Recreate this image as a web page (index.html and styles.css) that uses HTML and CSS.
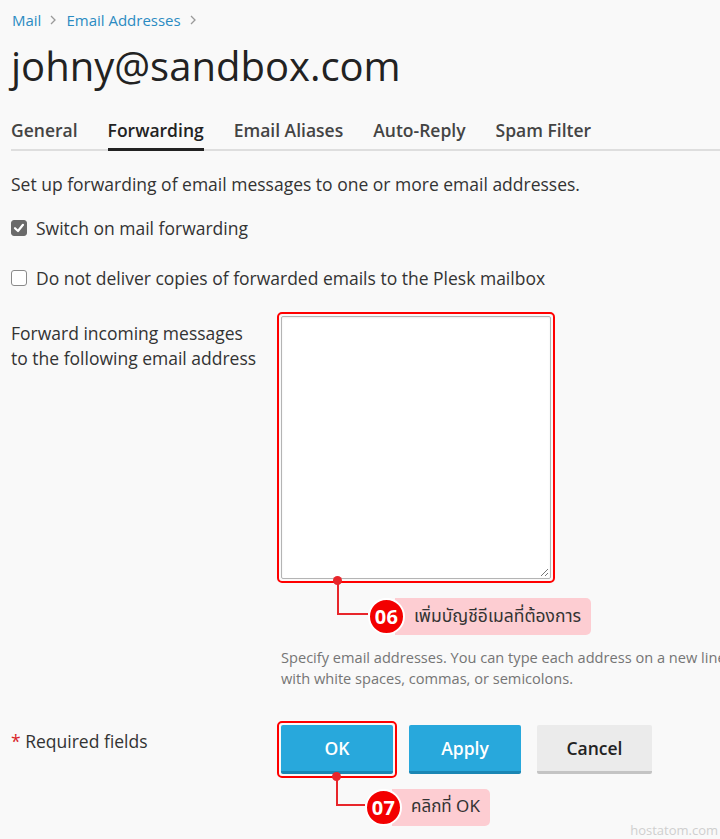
FILE: index.html
```html
<!DOCTYPE html>
<html lang="en">
<head>
<meta charset="utf-8">
<title>johny@sandbox.com</title>
<link rel="stylesheet" href="styles.css">
</head>
<body>
<div class="page">
  <nav class="breadcrumb">
    <a href="#">Mail</a>
    <svg class="chev" width="8" height="12" viewBox="0 0 8 12"><polyline points="2,2 6,6 2,10" fill="none" stroke="#9a9a9a" stroke-width="1.3"/></svg>
    <a href="#">Email Addresses</a>
    <svg class="chev" width="8" height="12" viewBox="0 0 8 12"><polyline points="2,2 6,6 2,10" fill="none" stroke="#9a9a9a" stroke-width="1.3"/></svg>
  </nav>

  <h1 class="title">johny@sandbox.com</h1>

  <div class="tabs">
    <span class="tab">General</span>
    <span class="tab active">Forwarding</span>
    <span class="tab">Email Aliases</span>
    <span class="tab">Auto-Reply</span>
    <span class="tab">Spam Filter</span>
  </div>

  <p class="intro">Set up forwarding of email messages to one or more email addresses.</p>

  <div class="check-row first">
    <span class="box checked">
      <svg width="16" height="16" viewBox="0 0 16 16"><polyline points="4,8.2 7,11 12,4.8" fill="none" stroke="#fff" stroke-width="2.2" stroke-linecap="round" stroke-linejoin="round"/></svg>
    </span>
    <span class="check-label">Switch on mail forwarding</span>
  </div>

  <div class="check-row">
    <span class="box"></span>
    <span class="check-label">Do not deliver copies of forwarded emails to the Plesk mailbox</span>
  </div>

  <div class="form-row">
    <div class="form-label">Forward incoming messages<br>to the following email address</div>
    <div class="form-field">
      <div class="hl hl-area">
        <div class="textarea">
          <svg class="grip" width="10" height="10" viewBox="0 0 10 10"><line x1="9" y1="2" x2="2" y2="9" stroke="#777" stroke-width="1"/><line x1="9" y1="6" x2="6" y2="9" stroke="#777" stroke-width="1"/></svg>
        </div>
      </div>
      <div class="callout callout-06">
        <span class="connector"></span>
        <span class="dot"></span>
        <span class="num">06</span>
        <span class="note thai">เพิ่มบัญชีอีเมลที่ต้องการ</span>
      </div>
      <p class="hint">Specify email addresses. You can type each address on a new line or separate them<br>with white spaces, commas, or semicolons.</p>
    </div>
  </div>

  <div class="form-row buttons-row">
    <div class="form-label req"><span class="star">*</span> Required fields</div>
    <div class="form-field">
      <div class="btns">
        <div class="hl hl-btn"><button class="btn btn-primary">OK</button></div>
        <button class="btn btn-primary">Apply</button>
        <button class="btn btn-cancel">Cancel</button>
      </div>
      <div class="callout callout-07">
        <span class="connector"></span>
        <span class="dot"></span>
        <span class="num">07</span>
        <span class="note thai">คลิกที่ OK</span>
      </div>
    </div>
  </div>

  <div class="watermark">hostatom.com</div>
</div>
</body>
</html>
```

FILE: styles.css
```css
html, body {
  margin: 0;
  padding: 0;
  height: 839px;
  overflow: hidden;
  background: #f9f9f9;
}

body {
  font-family: "Open Sans", "Noto Sans", sans-serif;
  color: #333;
  font-size: 17.5px;
}

.page {
  position: relative;
  height: 839px;
  padding-left: 11px;
  white-space: nowrap;
}

.breadcrumb {
  display: flex;
  align-items: center;
  height: 20px;
  padding-top: 10px;
  padding-left: 1px;
  font-size: 15px;
  line-height: 20px;
}

.breadcrumb a {
  color: #2b8bc2;
  text-decoration: none;
}

.chev {
  margin: 0 9px 0 8px;
}

.title {
  margin: 12px 0 0 0;
  font-size: 40px;
  line-height: 48px;
  font-weight: 400;
  color: #222;
}

.tabs {
  display: flex;
  gap: 30px;
  margin-top: 20px;
  padding-top: 8px;
  border-bottom: 2px solid #dedede;
}

.tab {
  font-size: 17.5px;
  font-weight: 600;
  line-height: 24px;
  color: #444;
  padding-bottom: 6px;
  border-bottom: 3px solid transparent;
  margin-bottom: -2px;
}

.tab.active {
  color: #222;
  border-bottom-color: #222;
}

.intro {
  margin: 21px 0 20px 0;
  line-height: 24px;
}

.check-row {
  display: flex;
  align-items: center;
  gap: 9px;
  height: 24px;
}

.check-row.first {
  margin-bottom: 26px;
}

.box {
  box-sizing: border-box;
  width: 16px;
  height: 16px;
  border: 1px solid #8a8a8a;
  border-radius: 3px;
  background: #fff;
  display: flex;
}

.box.checked {
  background: #6a6a6a;
  border-color: #6a6a6a;
}

.box.checked svg {
  margin: -1px;
}

.check-label {
  line-height: 24px;
}

.form-row {
  display: flex;
  margin-top: 26px;
}

.form-label {
  flex: none;
  width: 270px;
  padding-top: 5px;
  line-height: 25px;
}

.form-field {
  position: relative;
  flex: none;
}

.hl {
  border: 2px solid #f00;
  border-radius: 5px;
  padding: 2px;
  margin: -4px 0 0 -4px;
  width: fit-content;
}

.textarea {
  position: relative;
  box-sizing: border-box;
  width: 270px;
  height: 263px;
  background: #fff;
  border: 1px solid #b4b4b4;
  border-radius: 2px;
  box-shadow: inset 0 1px 2px rgba(0, 0, 0, 0.08);
}

.grip {
  position: absolute;
  right: 1px;
  bottom: 1px;
}

.callout {
  position: relative;
  display: flex;
  align-items: center;
  height: 38px;
}

.callout-06 {
  margin: 14px 0 0 87px;
}

.callout-07 {
  margin: 10px 0 0 84px;
}

.connector {
  position: absolute;
  left: -31px;
  top: -17px;
  width: 31px;
  height: 35px;
  box-sizing: border-box;
  border-left: 2px solid #e8262b;
  border-bottom: 2px solid #e8262b;
}

.callout-07 .connector {
  left: -29px;
  top: -12px;
  width: 29px;
  height: 30px;
}

.dot {
  position: absolute;
  left: -35px;
  top: -21px;
  width: 9px;
  height: 9px;
  border-radius: 50%;
  background: #e8262b;
}

.callout-07 .dot {
  left: -33px;
  top: -16px;
}

.num {
  position: relative;
  z-index: 1;
  box-sizing: border-box;
  width: 37px;
  height: 37px;
  border-radius: 50%;
  border: 2px solid #fff;
  background: #f30000;
  color: #fff;
  font-weight: 700;
  font-size: 20px;
  display: flex;
  align-items: center;
  justify-content: center;
  letter-spacing: 0.3px;
}

.note {
  margin-left: -10px;
  padding: 0 10px 0 19px;
  height: 37px;
  line-height: 37px;
  background: #fdcdd2;
  border-radius: 0 5px 5px 0;
  color: #333;
  font-size: 17.5px;
}

.callout-07 .note {
  font-size: 17px;
}

.thai {
  font-family: "Noto Sans Thai", "Noto Sans Thai UI", "Tahoma", "Loma", "Garuda", "Noto Sans", sans-serif;
}

.hint {
  margin: 12px 0 0 0;
  font-size: 14.6px;
  line-height: 21px;
  color: #757575;
}

.buttons-row {
  margin-top: 36px;
}

.req {
  padding-top: 4px;
}

.star {
  color: #d9262a;
}

.btns {
  display: flex;
  align-items: flex-start;
  gap: 16px;
}

.hl-btn {
  margin-right: -4px;
}

.btn {
  box-sizing: border-box;
  height: 49px;
  min-width: 112px;
  padding: 0 20px;
  border: 0;
  border-radius: 2px;
  font-family: "Open Sans", "Noto Sans", sans-serif;
  font-size: 17.5px;
  font-weight: 600;
  cursor: pointer;
  display: block;
}

.btn-primary {
  background: #28a8dc;
  color: #fff;
  border-bottom: 3px solid #1b86b4;
}

.btn-cancel {
  min-width: 115px;
  background: #ebebeb;
  color: #222;
  border-bottom: 3px solid #c4c4c4;
}

.watermark {
  position: absolute;
  right: 2px;
  bottom: 0;
  font-size: 13px;
  line-height: 18px;
  color: #cfcfcf;
}
```
